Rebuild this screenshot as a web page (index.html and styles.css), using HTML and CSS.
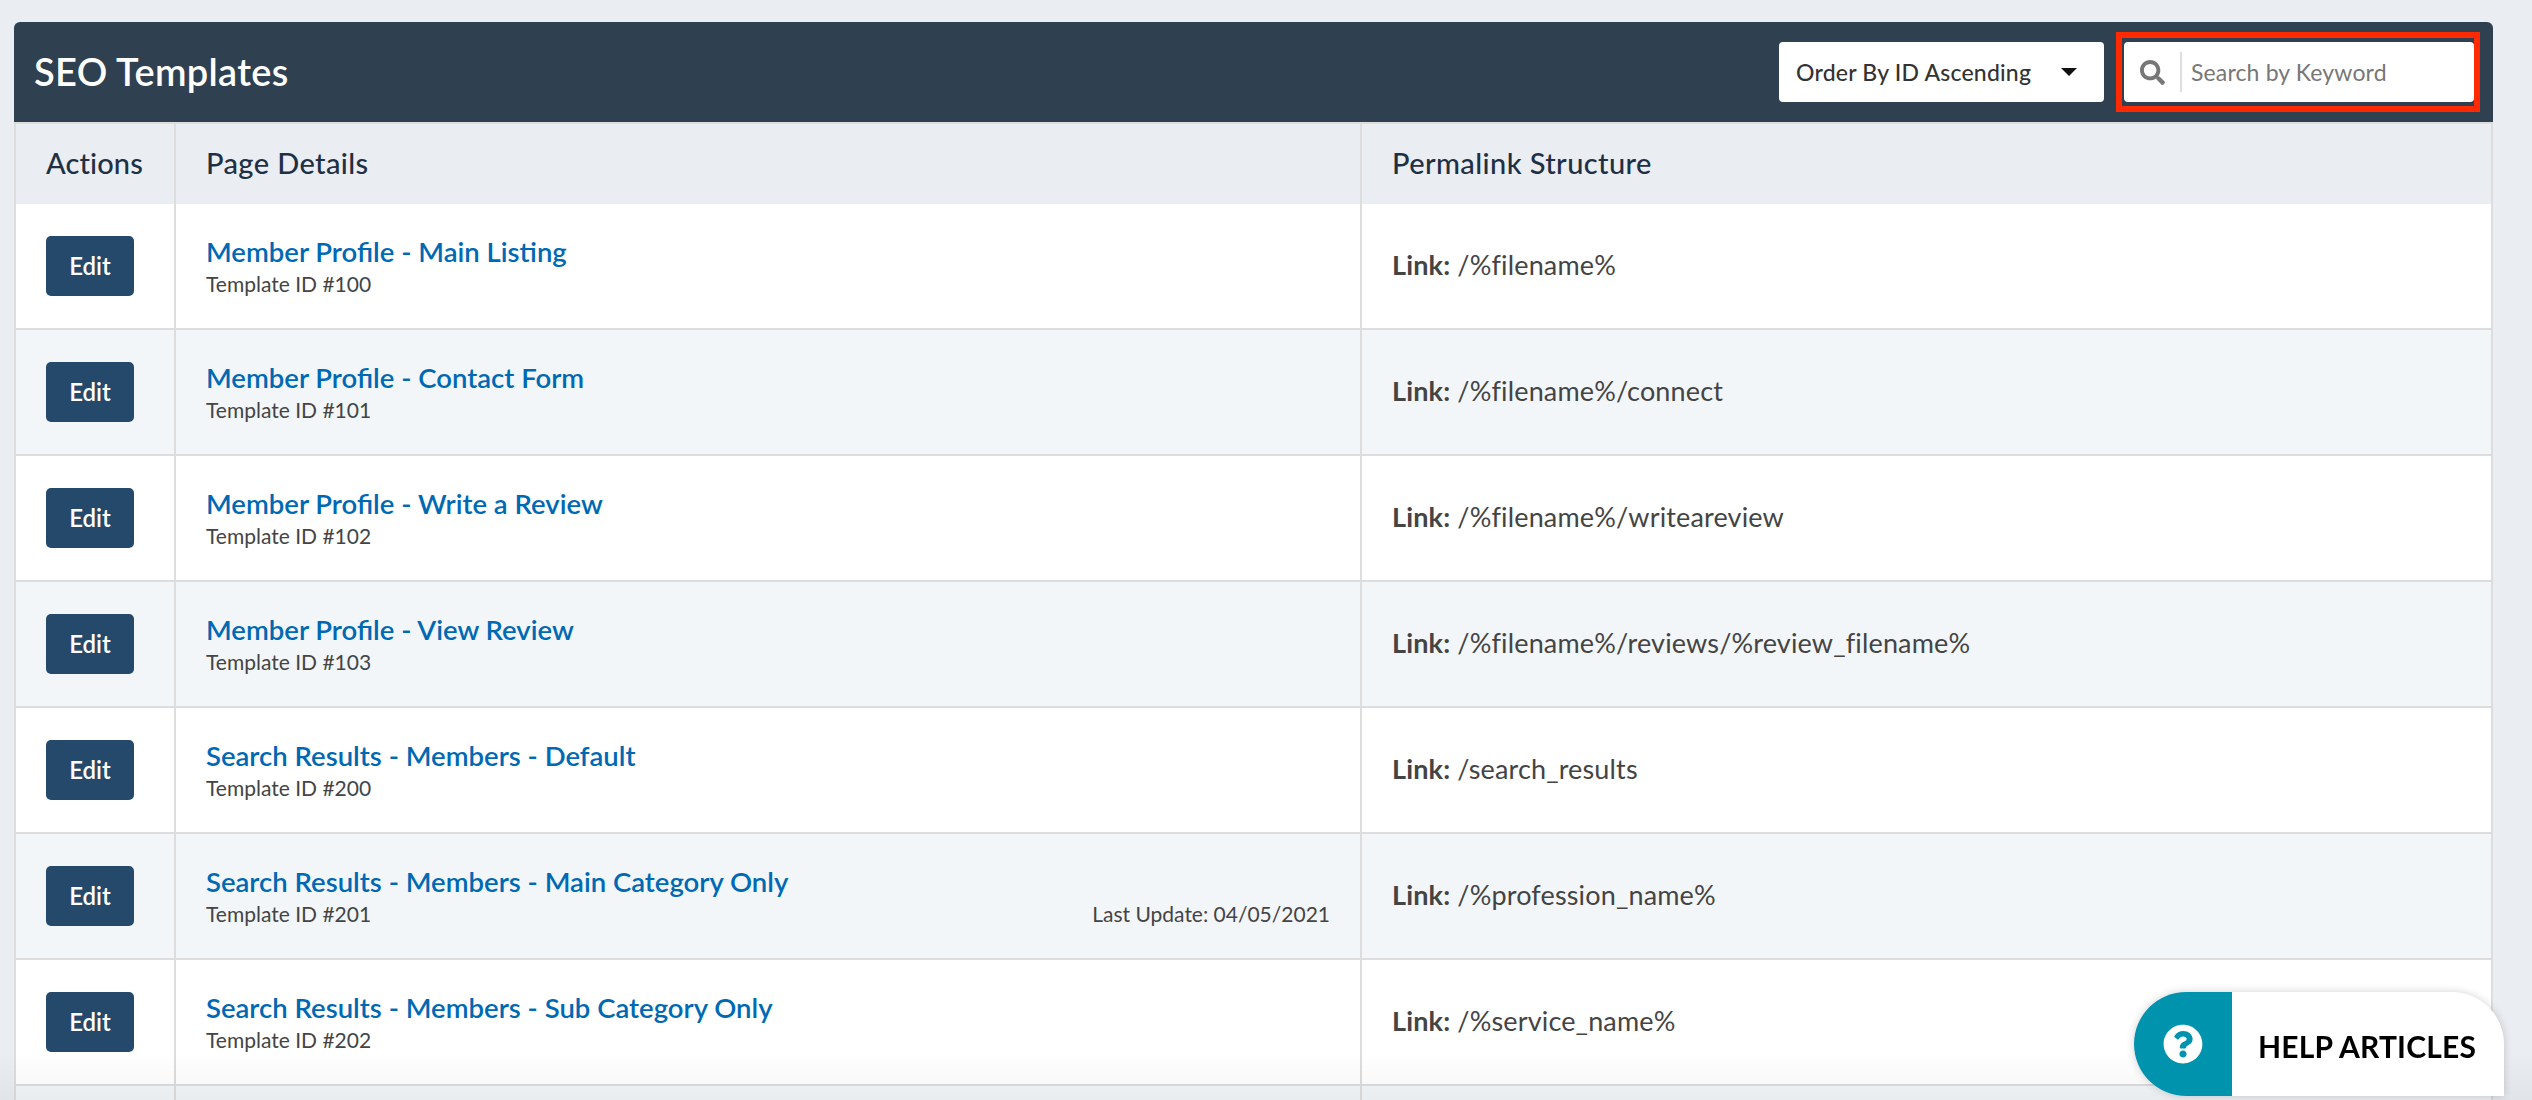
FILE: index.html
```html
<!doctype html>
<html lang="en">
<head>
	<meta charset="UTF-8">
	<title>SEO Templates</title>
	<link rel="stylesheet" href="styles.css">
</head>
<body>
	<div class="panel">
		<div class="panel-head">
			<h1>SEO Templates</h1>
			<div class="tools">
				<div class="order">
					<span>Order By ID Ascending</span>
					<i class="caret"></i>
				</div>
				<div class="search-mark">
					<div class="search">
						<svg class="search-icon" viewBox="0 0 512 512"><path d="M505 442.7L405.3 343c-4.5-4.5-10.6-7-17-7H372c27.6-35.3 44-79.7 44-128C416 93.1 322.9 0 208 0S0 93.1 0 208s93.1 208 208 208c48.3 0 92.7-16.4 128-44v16.3c0 6.4 2.5 12.5 7 17l99.7 99.7c9.4 9.4 24.6 9.4 33.9 0l28.3-28.3c9.4-9.4 9.4-24.6.1-34zM208 336c-70.7 0-128-57.2-128-128 0-70.7 57.2-128 128-128 70.7 0 128 57.2 128 128 0 70.7-57.2 128-128 128z"/></svg>
						<input type="text" placeholder="Search by Keyword">
					</div>
				</div>
			</div>
		</div>
		<table>
			<thead>
				<tr>
					<th class="col-actions">Actions</th>
					<th class="col-details">Page Details</th>
					<th>Permalink Structure</th>
				</tr>
			</thead>
			<tbody>
				<tr>
					<td><a class="btn" href="#">Edit</a></td>
					<td>
						<a class="name" href="#">Member Profile - Main Listing</a>
						<div class="meta"><span>Template ID #100</span></div>
					</td>
					<td><p class="link"><b>Link:</b> /%filename%</p></td>
				</tr>
				<tr>
					<td><a class="btn" href="#">Edit</a></td>
					<td>
						<a class="name" href="#">Member Profile - Contact Form</a>
						<div class="meta"><span>Template ID #101</span></div>
					</td>
					<td><p class="link"><b>Link:</b> /%filename%/connect</p></td>
				</tr>
				<tr>
					<td><a class="btn" href="#">Edit</a></td>
					<td>
						<a class="name" href="#">Member Profile - Write a Review</a>
						<div class="meta"><span>Template ID #102</span></div>
					</td>
					<td><p class="link"><b>Link:</b> /%filename%/writeareview</p></td>
				</tr>
				<tr>
					<td><a class="btn" href="#">Edit</a></td>
					<td>
						<a class="name" href="#">Member Profile - View Review</a>
						<div class="meta"><span>Template ID #103</span></div>
					</td>
					<td><p class="link"><b>Link:</b> /%filename%/reviews/%review_filename%</p></td>
				</tr>
				<tr>
					<td><a class="btn" href="#">Edit</a></td>
					<td>
						<a class="name" href="#">Search Results - Members - Default</a>
						<div class="meta"><span>Template ID #200</span></div>
					</td>
					<td><p class="link"><b>Link:</b> /search_results</p></td>
				</tr>
				<tr>
					<td><a class="btn" href="#">Edit</a></td>
					<td>
						<a class="name" href="#">Search Results - Members - Main Category Only</a>
						<div class="meta"><span>Template ID #201</span><span>Last Update: 04/05/2021</span></div>
					</td>
					<td><p class="link"><b>Link:</b> /%profession_name%</p></td>
				</tr>
				<tr>
					<td><a class="btn" href="#">Edit</a></td>
					<td>
						<a class="name" href="#">Search Results - Members - Sub Category Only</a>
						<div class="meta"><span>Template ID #202</span></div>
					</td>
					<td><p class="link"><b>Link:</b> /%service_name%</p></td>
				</tr>
				<tr>
					<td></td>
					<td></td>
					<td></td>
				</tr>
			</tbody>
		</table>
	</div>
	<div class="fade"></div>
	<a class="help" href="#">
		<span class="help-icon">
			<svg viewBox="0 0 512 512"><path d="M504 256c0 136.997-111.043 248-248 248S8 392.997 8 256C8 119.083 119.043 8 256 8s248 111.083 248 248zM262.655 90c-54.497 0-89.255 22.957-116.549 63.758-3.536 5.286-2.353 12.415 2.715 16.258l34.699 26.31c5.205 3.947 12.621 3.008 16.665-2.122 17.864-22.658 30.113-35.797 57.303-35.797 20.429 0 45.698 13.148 45.698 32.958 0 14.976-12.363 22.667-32.534 33.976C247.128 238.528 216 254.941 216 296v4c0 6.627 5.373 12 12 12h56c6.627 0 12-5.373 12-12v-1.333c0-28.462 83.186-29.647 83.186-106.667 0-58.002-60.165-102-116.531-102zM256 338c-25.365 0-46 20.635-46 46 0 25.364 20.635 46 46 46s46-20.636 46-46c0-25.365-20.635-46-46-46z"/></svg>
		</span>
		<span class="help-text">HELP ARTICLES</span>
	</a>
</body>
</html>
```

FILE: styles.css
```css
*{margin:0;padding:0;box-sizing:border-box;}
html,body{height:100%;overflow:hidden;}
body{
	background:#eaedf2;
	font-family:"Lato","Noto Sans",sans-serif;
	color:#444;
	padding:22px 39px 0 14px;
}

/* dark bar on top of the table */
.panel-head{
	height:100px;
	background:#2f4050;
	border-radius:6px 6px 0 0;
	display:flex;
	align-items:center;
	justify-content:space-between;
	padding:0 19px 0 20px;
}
.panel-head h1{
	font-size:38px;
	font-weight:600;
	letter-spacing:.3px;
	color:#fff;
	padding-bottom:3px;
}
.tools{display:flex;align-items:center;gap:12px;}
.order{
	width:325px;
	height:60px;
	background:#fff;
	border-radius:4px;
	display:flex;
	align-items:center;
	justify-content:space-between;
	padding:0 27px 0 17px;
	font-size:23px;
	font-weight:500;
	letter-spacing:.2px;
	color:#333;
}
.caret{
	width:0;
	height:0;
	border-left:8px solid transparent;
	border-right:8px solid transparent;
	border-top:8px solid #111;
}
.search-mark{
	border:6px solid #ff2a00;
	padding:4px 0 4px 2px;
	margin:-10px -6px -10px 0;
}
.search{
	width:350px;
	height:60px;
	background:#fff;
	border-radius:4px;
	display:flex;
	align-items:center;
	padding-left:16px;
}
.search-icon{width:25px;height:25px;fill:#777;flex:none;}
.search input{
	border:0;
	outline:0;
	border-left:2px solid #ddd;
	height:40px;
	margin-left:15px;
	padding-left:9px;
	flex:1;
	min-width:0;
	font-family:inherit;
	font-size:23px;
	letter-spacing:.15px;
	background:none;
}
.search input::placeholder{color:#777;opacity:1;}

/* table */
table{
	width:100%;
	table-layout:fixed;
	border-collapse:separate;
	border-spacing:0;
	border-top:2px solid #ddd;
	border-left:2px solid #ddd;
}
th,td{border-right:2px solid #ddd;}
th{
	height:80px;
	text-align:left;
	padding:0 0 3px 30px;
	font-size:29px;
	font-weight:500;
	letter-spacing:.4px;
	color:#1f3044;
	background:#eaedf2;
}
.col-actions{width:160px;letter-spacing:.1px;}
.col-details{width:1186px;}
td{
	height:126px;
	padding:0 30px;
	border-bottom:2px solid #ddd;
	background:#fff;
	vertical-align:middle;
}
tbody tr:nth-child(even) td{background:#f3f6f9;}
.link{
	font-size:27px;
	letter-spacing:.15px;
	padding-bottom:3px;
}
.link b{font-weight:700;}
.btn{
	display:block;
	width:88px;
	height:60px;
	line-height:60px;
	text-align:center;
	background:#24496a;
	border-radius:5px;
	color:#fff;
	font-size:24px;
	font-weight:600;
	text-decoration:none;
}
.name{
	display:block;
	font-size:27.5px;
	font-weight:600;
	color:#0069b4;
	text-decoration:none;
	line-height:34px;
}
.meta{
	display:flex;
	justify-content:space-between;
	font-size:21px;
	line-height:28px;
	padding-top:1px;
}

/* slight shade at the bottom of the window */
.fade{
	position:fixed;
	left:0;
	right:0;
	bottom:0;
	height:48px;
	background:linear-gradient(rgba(0,0,0,0),rgba(0,0,0,.035));
	pointer-events:none;
}

/* floating help tab */
.help{
	position:fixed;
	left:2134px;
	top:992px;
	width:370px;
	height:104px;
	display:flex;
	background:#fff;
	border-radius:52px 52px 0 52px;
	overflow:hidden;
	box-shadow:0 0 8px rgba(0,0,0,.18);
	text-decoration:none;
}
.help-icon{
	width:98px;
	background:#0093ae;
	display:flex;
	align-items:center;
	justify-content:center;
}
.help-icon svg{width:40px;height:40px;fill:#fff;}
.help-text{
	flex:1;
	display:flex;
	align-items:center;
	padding:4px 0 0 26px;
	font-size:30px;
	font-weight:700;
	letter-spacing:.2px;
	color:#000;
}
```
